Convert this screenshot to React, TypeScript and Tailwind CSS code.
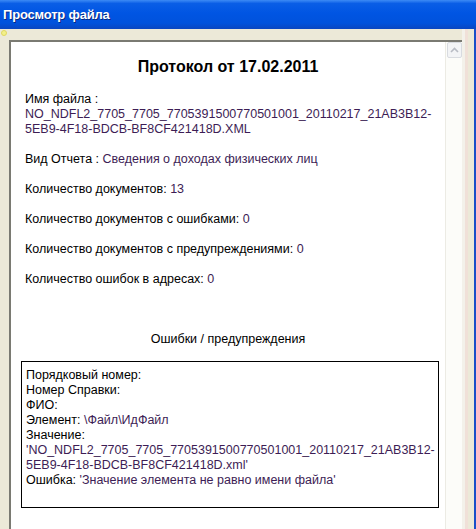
import React from "react";

const V = ({ children }: { children: React.ReactNode }) => (
  <span className="text-[#3d1d55]">{children}</span>
);

export default function App() {
  return (
    <div
      className="w-[476px] h-[529px] flex flex-col overflow-hidden bg-[#ECE9D8]"
      style={{ fontFamily: '"Liberation Sans", Arial, sans-serif' }}
    >
      {/* Title bar */}
      <div className="h-[29px] shrink-0 flex items-center pl-[3px] bg-[linear-gradient(180deg,#3d8bf5_0%,#0a5ee6_12%,#0055e3_45%,#0052dc_80%,#0a46c0_100%)]">
        <span className="text-white font-bold text-[13px] tracking-[-0.2px] [text-shadow:1px_1px_0_#0a2a80]">
          Просмотр файла
        </span>
      </div>

      {/* Body */}
      <div className="flex-1 flex min-h-0 relative">
        <div className="absolute left-[1px] top-[1px] w-[6px] h-[6px] rounded-full bg-[#f3f08a] border border-[#e0d860]" />
        <div className="flex-1 min-w-0 flex min-h-0 pl-[9px] pt-[11px]">
          <div className="flex-1 min-w-0 flex min-h-0 border-l-2 border-t-2 border-l-[#7a7a72] border-t-[#7a7a72]">
            {/* Content */}
            <div className="flex-1 min-w-0 bg-white text-[12.5px] leading-[15px] text-black overflow-hidden">
              <div className="flex flex-col gap-[15px] pt-[15px]">
                <div className="text-center font-bold text-[16px] leading-[20px]">
                  Протокол от 17.02.2011
                </div>
                <div className="pl-[14px] pr-[4px]">
                  Имя файла : <br />
                  <V>
                    NO_NDFL2_7705_7705_7705391500770501001_20110217_21AB3B12-
                    <br />
                    5EB9-4F18-BDCB-BF8CF421418D.XML
                  </V>
                </div>
                <div className="pl-[14px]">
                  Вид Отчета : <V>Сведения о доходах физических лиц</V>
                </div>
                <div className="pl-[14px]">
                  Количество документов: <V>13</V>
                </div>
                <div className="pl-[14px]">
                  Количество документов с ошибками: <V>0</V>
                </div>
                <div className="pl-[14px]">
                  Количество документов с предупреждениями: <V>0</V>
                </div>
                <div className="pl-[14px]">
                  Количество ошибок в адресах: <V>0</V>
                </div>
                <div className="text-center mt-[30px]">Ошибки / предупреждения</div>
                <div className="pl-[10px] pr-[6px] -mt-[1px]">
                  <div className="border-[1.5px] border-black pl-[4px] pt-[6px] pb-[19px]">
                    Порядковый номер:
                    <br />
                    Номер Справки:
                    <br />
                    ФИО:
                    <br />
                    Элемент: <V>\Файл\ИдФайл</V>
                    <br />
                    Значение:
                    <br />
                    <V>
                      'NO_NDFL2_7705_7705_7705391500770501001_20110217_21AB3B12-
                      <br />
                      5EB9-4F18-BDCB-BF8CF421418D.xml'
                    </V>
                    <br />
                    Ошибка: <V>'Значение элемента не равно имени файла'</V>
                  </div>
                </div>
              </div>
            </div>
            {/* Scrollbar */}
            <div className="w-[17px] shrink-0 bg-[#fcfcf9] border-l border-[#ecebe4] flex flex-col items-center">
              <div className="w-[15px] h-[16px] rounded-[2px] border border-[#d8dbe0] bg-[#f3f4f6] flex items-center justify-center">
                <svg width="9" height="6" viewBox="0 0 9 6">
                  <path d="M1 5 L4.5 1.5 L8 5" fill="none" stroke="#b8bcc4" strokeWidth="1.6" />
                </svg>
              </div>
            </div>
          </div>
        </div>
        {/* Right frame */}
        <div className="w-[12px] shrink-0 flex">
          <div className="w-[3px] bg-[#f3f1ea]" />
          <div className="w-[3px] bg-[#f0e0d8]" />
          <div className="flex-1 bg-[#ECE9D8]" />
        </div>
        <div className="w-[2px] shrink-0 bg-[#1a4fc8]" />
      </div>
    </div>
  );
}
